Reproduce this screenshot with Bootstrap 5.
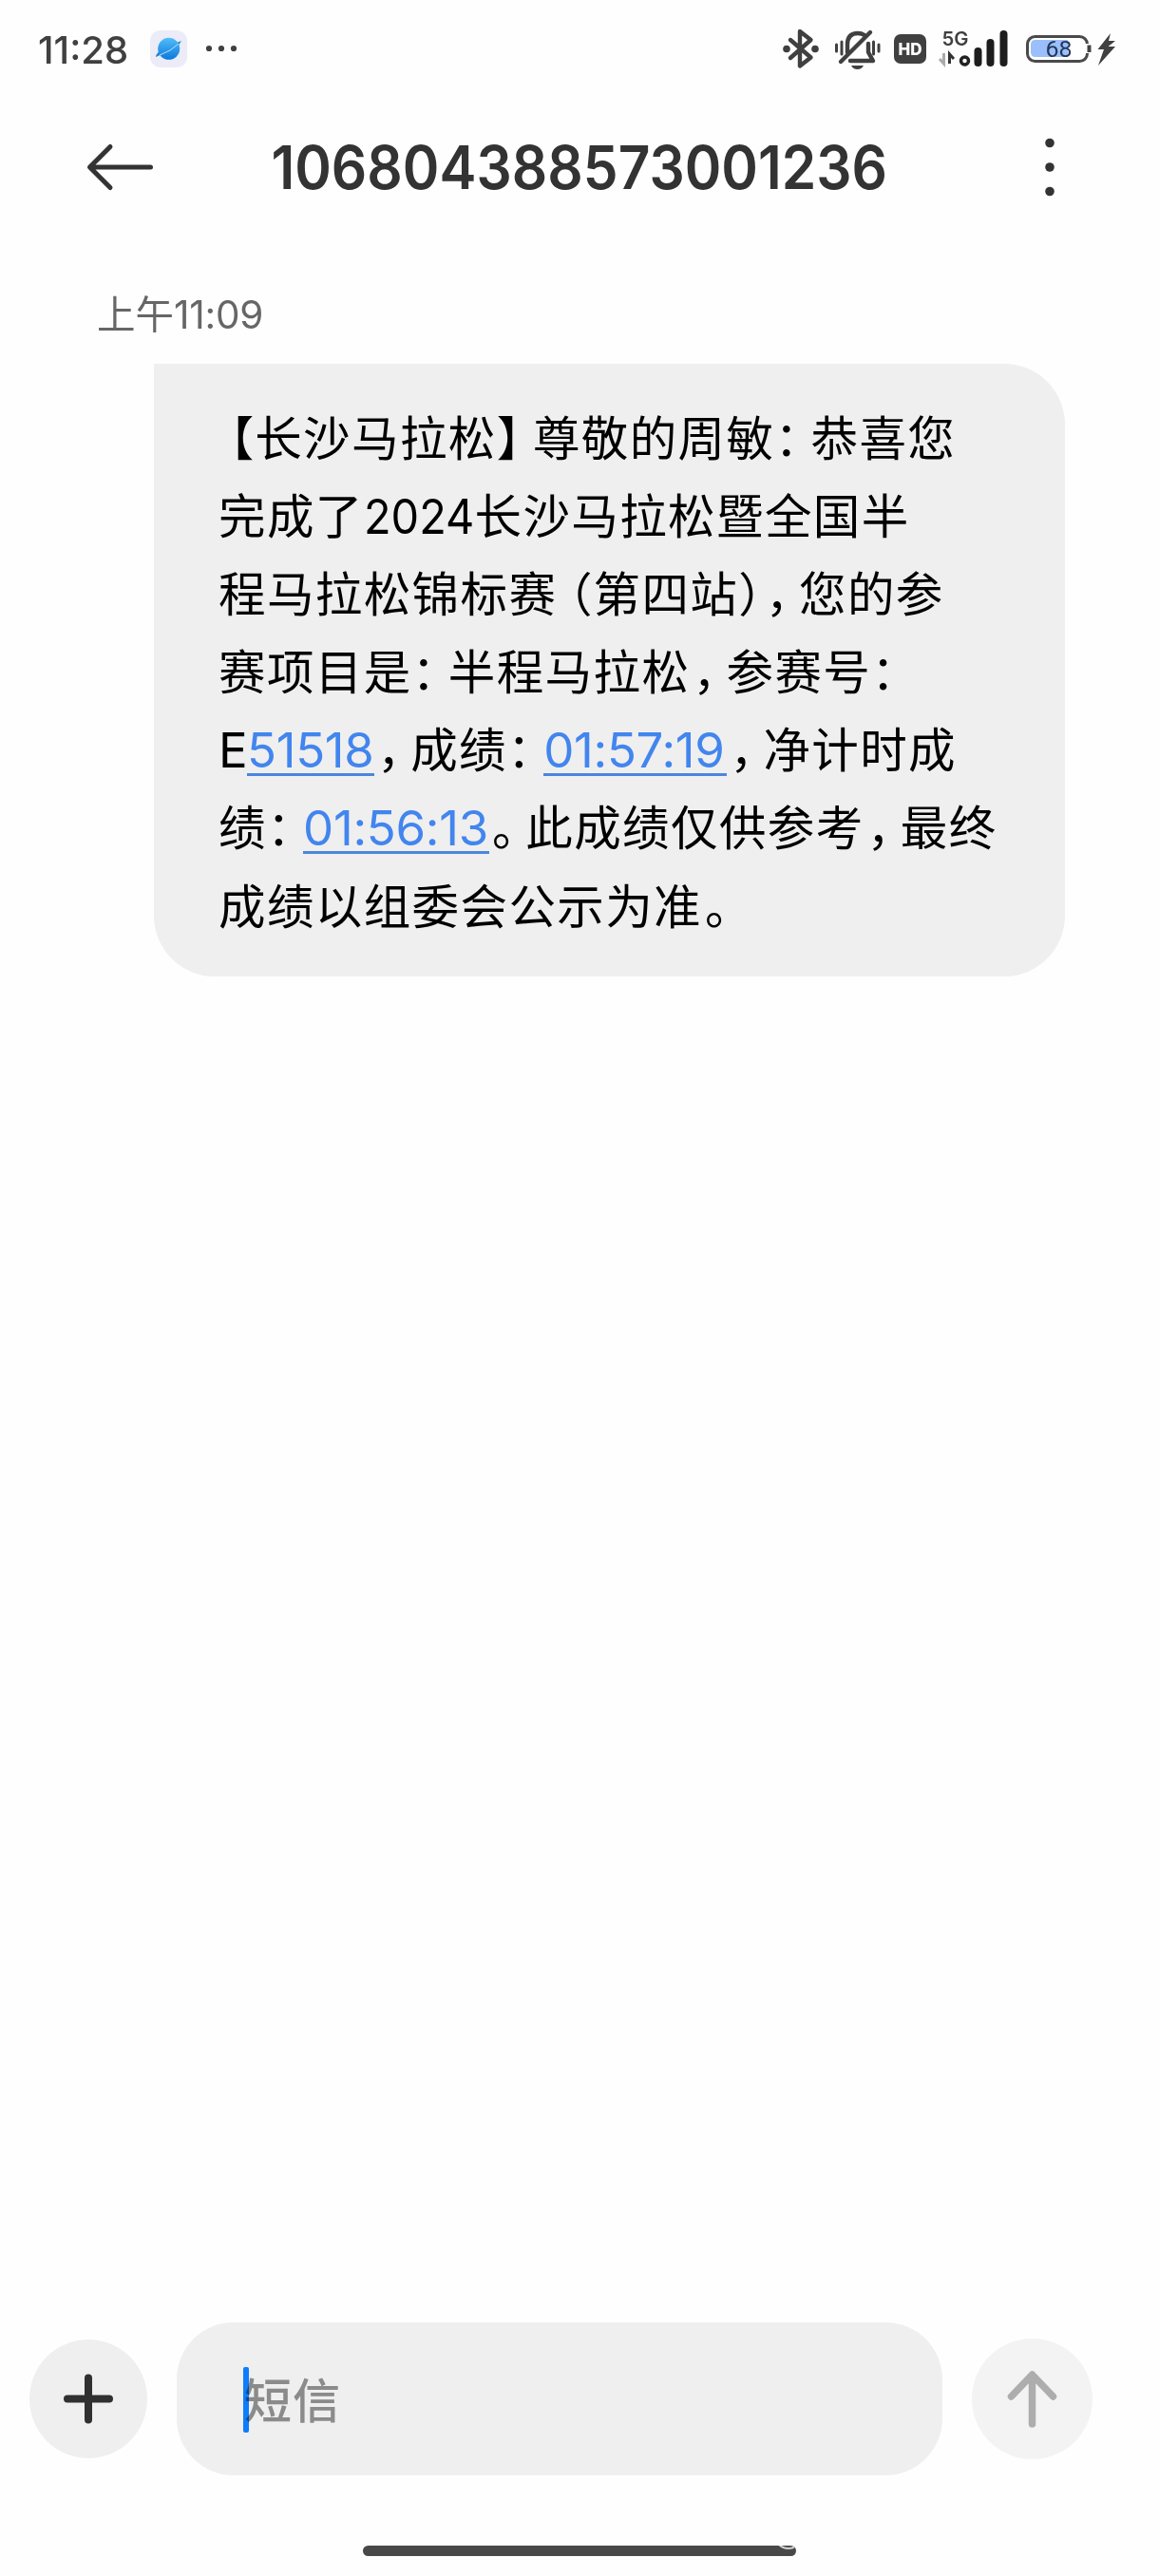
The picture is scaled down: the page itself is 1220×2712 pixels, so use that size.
<!DOCTYPE html>
<html lang="zh-CN">
<head>
<meta charset="utf-8">
<meta name="viewport" content="width=device-width, initial-scale=1">
<title>短信</title>
<link href="https://cdn.jsdelivr.net/npm/bootstrap@5.3.0/dist/css/bootstrap.min.css" rel="stylesheet">
<style>
body{background:#fefefe;font-family:Inter,"Noto Sans CJK SC",sans-serif;color:#333;}
.phone{width:1220px;height:2712px;overflow:hidden;}
.phone svg{display:block;flex:none;}
.statusbar{height:104px;padding:0 45px 0 40px;color:#404040;}
.clock{font-size:40px;font-weight:500;line-height:107px;width:118px;letter-spacing:0;white-space:nowrap;}
.titlebar{height:144px;padding:0 88px;}
.titlebar h1{font-size:63px;font-weight:600;line-height:148px;letter-spacing:0;color:#333;white-space:nowrap;transform:scaleX(.93);}
.stamp{height:135px;padding-left:102px;font-size:40.5px;line-height:167px;color:#666;white-space:nowrap;}
.stamp-time{letter-spacing:-.2px;}
.bubble{width:959px;height:645px;margin-left:162px;padding:35px 0 0 68px;background:#efefef;border-radius:0 64px 64px 64px;color:#000;}
.ln{height:82.1px;line-height:82.1px;font-family:"Noto Sans CJK SC",sans-serif;font-size:49.5px;letter-spacing:1.4px;white-space:nowrap;}
.pn{display:inline-block;width:38.2px;letter-spacing:0;font-feature-settings:"halt" 1;}
.pn-open{text-align:right;padding-right:1px;}
.pn-low{padding-left:3px;}
.pn-close{width:25.6px;}
.num{display:inline-block;font-family:Inter,sans-serif;font-size:51px;letter-spacing:0;line-height:60px;}
.num.yr{width:126px;margin-right:-9.2px;transform:scaleX(.92);transform-origin:0 50%;}
.num.ee{width:30px;}
a.num{color:#4285ee;text-decoration:none;border-bottom:3px solid #4b86de;line-height:46px;height:50px;letter-spacing:-.3px;}
.w-bib{width:134px;}
.w-gun{width:193px;}
.w-net{width:196px;}
.composer{padding:0 70px 0 31px;height:161px;}
.field{width:806px;height:161px;margin:0 31px;border-radius:60px;background:#efefef;padding-left:70px;}
.caret{width:6px;height:69px;border-radius:2px;background:#0d7dfb;margin-top:1px;}
.hint{font-family:"Noto Sans CJK SC",sans-serif;font-size:50px;font-weight:500;letter-spacing:1px;color:#949494;margin:-3px 0 0 -5px;mix-blend-mode:multiply;}
.home{width:456px;height:11px;border-radius:6px;background:#484848;margin:74px 0 21px 382px;overflow:hidden;}
</style>
<script src="https://cdn.jsdelivr.net/npm/bootstrap@5.3.0/dist/js/bootstrap.bundle.min.js"></script>
</head>
<body>
<main class="phone d-flex flex-column">
  <header class="statusbar d-flex align-items-center">
    <div class="clock">11:28</div>
    <svg width="100" height="40" viewBox="158 32 100 40">
      <defs><linearGradient id="sky" x1="0" y1="0" x2="0" y2="1"><stop offset="0" stop-color="#52bdf8"/><stop offset="1" stop-color="#0d78dc"/></linearGradient></defs>
      <rect x="158" y="32" width="39" height="39" rx="11" fill="#ebecf7"/>
      <path d="M164 60Q164 57 168 54L170 57L186 45L191 43Q189 47 186 49Q175 56 164 60Z" fill="#2186d4"/>
      <circle cx="177.700" cy="51.300" r="11.500" fill="url(#sky)"/>
      <path d="M168 58Q180 54 188 46" fill="none" stroke="#b8e2fa" stroke-width="1"/>
      <g fill="#404040"><circle cx="220" cy="51" r="3.100"/><circle cx="233" cy="51" r="3.100"/><circle cx="246" cy="51" r="3.100"/></g>
    </svg>
    <svg class="ms-auto" width="355" height="60" viewBox="820 22 355 60">
      <g fill="none" stroke="#404040" stroke-width="4.400" stroke-linecap="round" stroke-linejoin="round">
        <path d="M832 42L853.500 60.500L842 69.500V33L853.500 42L832 61"/>
        <path d="M892 55V47Q892 35 903 35Q907 35 910 37M914 46V55L919 64H895"/>
        <path d="M885 65L916 34"/>
        <path d="M880.500 47V54M886 44V57M919.500 44V57M925 47V54" stroke-width="3"/>
      </g>
      <g fill="#404040"><circle cx="828" cy="51.500" r="3.800"/><circle cx="858" cy="51.500" r="3.800"/><path d="M896 69H909Q907 73 902.500 73T896 69Z"/></g>
      <rect x="941" y="36" width="34" height="31" rx="7" fill="#404040"/>
      <text x="958" y="57.500" text-anchor="middle" font-family="Inter" font-weight="800" font-size="17" fill="#fff">HD</text>
      <text x="991.500" y="48" font-family="Inter" font-weight="600" font-size="20" textLength="28" lengthAdjust="spacingAndGlyphs" fill="#404040">5G</text>
      <path d="M993.500 56V67L989 62" fill="none" stroke="#aaa" stroke-width="3"/>
      <path d="M999.500 67V57L1004 62" fill="none" stroke="#333" stroke-width="3"/>
      <circle cx="1015.500" cy="64" r="4" fill="none" stroke="#222" stroke-width="3.500"/>
      <path d="M1029.500 54V66M1042.500 45V66M1056.500 36V66" stroke="#1d1d1d" stroke-width="8" stroke-linecap="round"/>
      <rect x="1081.500" y="38.500" width="63" height="26" rx="8" fill="#fff" stroke="#4a4a4a" stroke-width="3"/>
      <path d="M1090 42H1124V60H1090Q1085 60 1085 55V47Q1085 42 1090 42Z" fill="#9bbffb"/>
      <path d="M1143 46H1149V56H1143Z" fill="#fff"/><path d="M1144.500 47.500H1148.500V55H1144.500Z" fill="#444"/>
      <text x="1114.500" y="60" text-anchor="middle" font-family="Roboto" font-weight="400" font-size="24" textLength="28" lengthAdjust="spacingAndGlyphs" fill="#24365a">68</text>
      <path d="M1169 35L1155.500 52H1162L1156 69L1174 49H1166.500L1174 43H1167Z" fill="#404040"/>
    </svg>
  </header>

  <nav class="titlebar d-flex align-items-center">
    <svg width="76" height="60" viewBox="88 146 76 60"><path d="M116 154.500L94.500 176L116 197.500M95 176H158.500" fill="none" stroke="#333" stroke-width="5" stroke-linecap="round" stroke-linejoin="round"/></svg>
    <h1 class="mb-0 mx-auto">106804388573001236</h1>
    <svg width="76" height="70" viewBox="1056 141 76 70"><g fill="#333"><circle cx="1105" cy="150.500" r="4.800"/><circle cx="1105" cy="176" r="4.800"/><circle cx="1105" cy="201.500" r="4.800"/></g></svg>
  </nav>

  <div class="stamp">上午<span class="stamp-time">11:09</span></div>

  <section class="bubble">
    <div class="ln"><span class="pn pn-open">【</span>长沙马拉松<span class="pn">】</span>尊敬的周敏<span class="pn">：</span>恭喜您</div>
    <div class="ln">完成了<span class="num yr">2024</span>长沙马拉松暨全国半</div>
    <div class="ln">程马拉松锦标赛<span class="pn pn-open">（</span>第四站<span class="pn pn-close">）</span><span class="pn pn-low">，</span>您的参</div>
    <div class="ln">赛项目是<span class="pn">：</span>半程马拉松<span class="pn pn-low">，</span>参赛号<span class="pn">：</span></div>
    <div class="ln"><span class="num ee">E</span><a class="num w-bib">51518</a><span class="pn pn-low">，</span>成绩<span class="pn">：</span><a class="num w-gun">01:57:19</a><span class="pn pn-low">，</span>净计时成</div>
    <div class="ln">绩<span class="pn">：</span><a class="num w-net">01:56:13</a><span class="pn pn-low">。</span>此成绩仅供参考<span class="pn pn-low">，</span>最终</div>
    <div class="ln">成绩以组委会公示为准<span class="pn pn-low">。</span></div>
  </section>

  <footer class="mt-auto">
    <div class="composer d-flex align-items-center">
      <svg width="124" height="125" viewBox="31 2464 124 125"><ellipse cx="93" cy="2526.500" rx="62" ry="62.500" fill="#efefef"/><path d="M71 2526.500H115M93 2504.500V2548.500" stroke="#303030" stroke-width="8" stroke-linecap="round"/></svg>
      <div class="field d-flex align-items-center"><span class="caret"></span><span class="hint">短信</span></div>
      <svg width="127" height="127" viewBox="1023 2463 127 127"><circle cx="1086.500" cy="2526.500" r="63.500" fill="#f3f3f3"/><path d="M1064.500 2524L1086.500 2501L1108.500 2524M1086.500 2502V2553" fill="none" stroke="#adadad" stroke-width="7.500" stroke-linecap="round" stroke-linejoin="round"/></svg>
    </div>
    <div class="home"><svg width="456" height="11" viewBox="382 2680 456 11"><path d="M820 2679Q824 2683 830 2683Q834 2683 837 2681" fill="none" stroke="#d4d4d4" stroke-width="2"/></svg></div>
  </footer>
</main>
</body>
</html>
